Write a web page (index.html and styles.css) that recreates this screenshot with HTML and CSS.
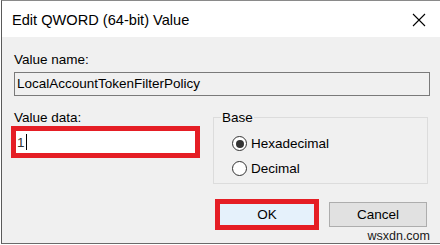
FILE: index.html
```html
<!DOCTYPE html>
<html>
<head>
<meta charset="utf-8">
<link rel="stylesheet" href="styles.css">
</head>
<body>
<div class="window">
  <div class="titlebar">
    <span class="title">Edit QWORD (64-bit) Value</span>
    <svg class="close" width="14" height="14" viewBox="0 0 14 14"><path d="M1 1L13 13M13 1L1 13" stroke="#000" stroke-width="1.1" fill="none"/></svg>
  </div>
  <div class="content">
    <div class="label">Value name:</div>
    <div class="namebox">LocalAccountTokenFilterPolicy</div>
    <div class="mid">
      <div class="left">
        <div class="label">Value data:</div>
        <div class="redbox datafield"><span class="val">1</span><span class="caret"></span></div>
      </div>
      <fieldset class="group">
        <legend>Base</legend>
        <div class="radio"><span class="circle on"></span><span>Hexadecimal</span></div>
        <div class="radio"><span class="circle"></span><span>Decimal</span></div>
      </fieldset>
    </div>
    <div class="buttons">
      <div class="redbox okwrap"><div class="btn ok">OK</div></div>
      <div class="btn cancel">Cancel</div>
    </div>
    <div class="watermark">wsxdn.com</div>
  </div>
</div>
</body>
</html>
```

FILE: styles.css
```css
html, body {
  margin: 0;
  padding: 0;
  background: #ffffff;
}
body {
  width: 440px;
  height: 245px;
  overflow: hidden;
  font-family: "Liberation Sans", Arial, sans-serif;
  color: #000;
}
.window {
  margin-left: 1px;
  width: 439px;
  height: 244px;
  border-left: 1px solid #5a5a5a;
  border-top: 1px solid #8a8a8a;
  border-bottom: 1px solid #6a6a6a;
  box-sizing: border-box;
  display: flex;
  flex-direction: column;
}
.titlebar {
  height: 36px;
  background: #fff;
  display: flex;
  align-items: center;
  justify-content: space-between;
  padding: 0 14px 0 10px;
  flex: none;
}
.title {
  font-size: 14.6px;
  margin-top: 2px;
}
.close {
  display: block;
  margin-top: 2px;
}
.content {
  flex: 1;
  background: #f0f0f0;
  padding: 14px 10px 0 9px;
  font-size: 13.5px;
  min-height: 0;
}
.label {
  line-height: 17px;
  padding-left: 3px;
}
.namebox {
  margin: 4px 0 0 3px;
  height: 24px;
  box-sizing: border-box;
  border: 1px solid #7a7a7a;
  padding-left: 2px;
  line-height: 22px;
  background: #f0f0f0;
}
.mid {
  display: grid;
  grid-template-columns: 189px 215px;
  column-gap: 13px;
  margin-top: 13px;
  align-items: start;
}
.redbox {
  border: 5px solid #e51e25;
}
.datafield {
  height: 32px;
  box-sizing: border-box;
  background: #fff;
  display: flex;
  align-items: center;
  padding-left: 1px;
}
.val {
  color: #333;
}
.caret {
  width: 1px;
  height: 16px;
  background: #000;
  margin-left: 1px;
}
.group {
  margin: 0;
  padding: 5px 0 0 0;
  height: 75px;
  box-sizing: border-box;
  border: 1px solid #dcdcdc;
  min-width: 0;
}
.group legend {
  padding: 0 1px;
  margin-left: 7px;
  line-height: 17px;
}
.radio {
  display: flex;
  align-items: center;
  gap: 4px;
  height: 25px;
  padding-left: 18px;
}
.circle {
  width: 15px;
  height: 15px;
  box-sizing: border-box;
  border: 1px solid #333;
  border-radius: 50%;
  background: #fff;
  display: flex;
  align-items: center;
  justify-content: center;
}
.circle.on::after {
  content: "";
  width: 8px;
  height: 8px;
  border-radius: 50%;
  background: #333;
}
.buttons {
  display: flex;
  align-items: center;
  margin-top: 15px;
  margin-left: 204px;
  gap: 10px;
}
.okwrap {
  width: 104px;
  height: 31px;
  box-sizing: border-box;
}
.btn {
  box-sizing: border-box;
  display: flex;
  align-items: center;
  justify-content: center;
}
.ok {
  height: 100%;
  background: #e5f1fb;
}
.cancel {
  width: 98px;
  height: 25px;
  background: #e1e1e1;
  border: 1px solid #adadad;
}
.watermark {
  text-align: right;
  font-size: 12.5px;
  line-height: 12px;
  color: #1a1a1a;
  padding-right: 0px;
}
```
